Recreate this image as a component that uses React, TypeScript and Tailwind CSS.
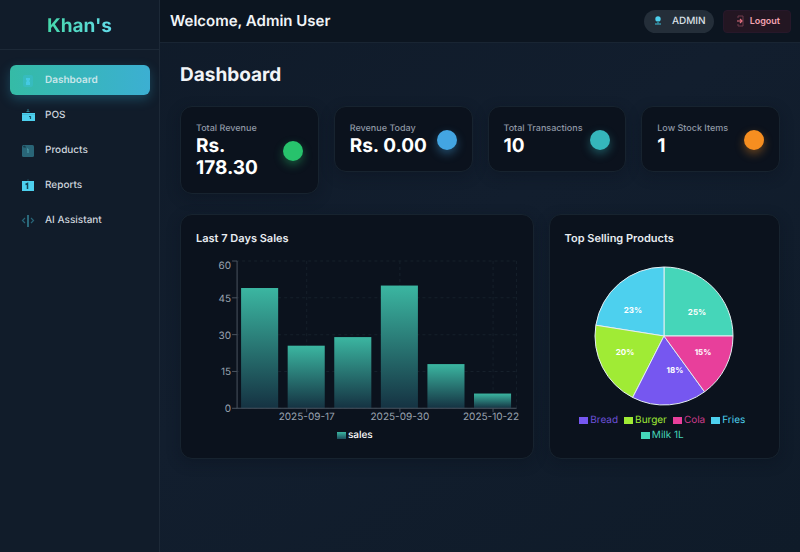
import React from "react";

const navItems = [
  { label: "Dashboard", icon: "dashboard" },
  { label: "POS", icon: "pos" },
  { label: "Products", icon: "products" },
  { label: "Reports", icon: "reports" },
  { label: "AI Assistant", icon: "ai" },
];

const stats = [
  { label: "Total Revenue", value: "Rs. 178.30", dot: "bg-[#27c26c] shadow-[0_4px_10px_#27c26c66]" },
  { label: "Revenue Today", value: "Rs. 0.00", dot: "bg-[#43a5e2] shadow-[0_4px_10px_#43a5e266]" },
  { label: "Total Transactions", value: "10", dot: "bg-[#35b6bb] shadow-[0_4px_10px_#35b6bb66]" },
  { label: "Low Stock Items", value: "1", dot: "bg-[#f68e20] shadow-[0_4px_10px_#f68e2066]" },
];

const sales = [49, 25.5, 29, 50, 18, 6];
const ticks = [0, 15, 30, 45, 60];
const dates = [
  { index: 1, label: "2025-09-17" },
  { index: 3, label: "2025-09-30" },
  { index: 5, label: "2025-10-22" },
];

const slices = [
  { name: "Milk 1L", from: 0, to: 90, text: "25%", x: 103, y: 45, color: "#45d6b9" },
  { name: "Fries", from: 90, to: 171, text: "23%", x: 39, y: 43, color: "#4dd0ee" },
  { name: "Burger", from: 171, to: 243, text: "20%", x: 31, y: 85, color: "#a0eb35" },
  { name: "Bread", from: 243, to: 306, text: "18%", x: 81, y: 103, color: "#7657f0" },
  { name: "Cola", from: 306, to: 360, text: "15%", x: 109, y: 85, color: "#e83f9b" },
];

const legend = [
  { name: "Bread", text: "text-[#6c51d8]", box: "bg-[#7657f0]" },
  { name: "Burger", text: "text-[#a0eb35]", box: "bg-[#a0eb35]" },
  { name: "Cola", text: "text-[#c93b89]", box: "bg-[#e83f9b]" },
  { name: "Fries", text: "text-[#4dd0ee]", box: "bg-[#4dd0ee]" },
  { name: "Milk 1L", text: "text-[#45d6b9]", box: "bg-[#45d6b9]" },
];

function NavIcon({ name }: { name: string }) {
  return (
    <svg className="size-[14px] shrink-0" viewBox="0 0 14 14" aria-hidden="true">
      {name === "dashboard" && (
        <>
          <rect x="2" y="1" width="10" height="12" rx="2" fill="#38bdd0" opacity="0.5" />
          <path d="M5 4h4v2H8.500v2H9v3H5V8h.5V6H5z" fill="#48cdec" opacity="0.8" />
        </>
      )}
      {name === "pos" && (
        <>
          <path d="M7 0v3M5.500 2.500h3" stroke="#2f8192" strokeWidth="1" />
          <rect x="1" y="4" width="13" height="8" fill="#4dd0ee" />
          <path d="M1 5.500h13" stroke="#3cabc4" strokeWidth="0.500" />
          <path d="M8 7.500h1.500V10" stroke="#15566a" strokeWidth="1.200" fill="none" />
        </>
      )}
      {name === "products" && (
        <>
          <rect x="1" y="1" width="12" height="12" rx="1.500" fill="#296577" />
          <path d="M2 3l2-1v2" stroke="#153847" strokeWidth="1" fill="none" />
          <path d="M6 5h1v4" stroke="#4fa1ad" strokeWidth="1" fill="none" />
        </>
      )}
      {name === "reports" && (
        <>
          <rect x="1" y="2" width="12" height="10" fill="#4dd0ee" />
          <path d="M4.500 5.500L6.500 4.500V10" stroke="#124557" strokeWidth="1.500" fill="none" />
          <path d="M7 0v2" stroke="#1e4654" strokeWidth="1" />
        </>
      )}
      {name === "ai" && (
        <>
          <path d="M4 4L1.500 6.500L4 9M10 4l2.500 2.500L10 9" stroke="#286578" strokeWidth="1.200" fill="none" />
          <path d="M7 1v12" stroke="#3d9db2" strokeWidth="1.200" />
        </>
      )}
    </svg>
  );
}

function SalesChart() {
  return (
    <svg className="w-full overflow-visible" viewBox="0 0 321 165" role="img" aria-label="Last 7 days sales">
      <defs>
        <linearGradient id="salesFill" x1="0" y1="0" x2="0" y2="1">
          <stop offset="0" stopColor="#3bb6a1" />
          <stop offset="1" stopColor="#153242" />
        </linearGradient>
      </defs>
      {ticks.map((tick) => {
        const y = 152 - (tick * 147) / 60;
        return (
          <g key={tick}>
            <path d={`M40 ${y}H320`} stroke="#16202b" strokeDasharray="3 3" />
            <path d={`M36 ${y}h5`} stroke="#4a535f" />
            <text x="35" y={tick === 60 ? y + 8 : y + 4} textAnchor="end" fontSize="10" fill="#9aa3b0">
              {tick}
            </text>
          </g>
        );
      })}
      {dates.map(({ index, label }) => {
        const x = 64 + index * 46.5;
        return (
          <g key={label}>
            <path d={`M${x} 5V152`} stroke="#16202b" strokeDasharray="3 3" />
            <path d={`M${x} 152v4`} stroke="#4a535f" />
            <text x={index === 5 ? x - 2 : x} y="164" textAnchor="middle" fontSize="10" fill="#9aa3b0">
              {label}
            </text>
          </g>
        );
      })}
      <path d="M320 5V152" stroke="#16202b" strokeDasharray="3 3" />
      {sales.map((value, index) => (
        <rect
          key={index}
          x={45 + index * 46.5}
          y={152 - (value * 147) / 60}
          width="37"
          height={(value * 147) / 60}
          fill="url(#salesFill)"
        />
      ))}
      <path d="M41 5V152H320" stroke="#4a535f" fill="none" />
    </svg>
  );
}

function PieChart() {
  const point = (degrees: number) => {
    const angle = (degrees * Math.PI) / 180;
    return `${70 + 69 * Math.cos(angle)} ${70 - 69 * Math.sin(angle)}`;
  };
  return (
    <svg className="mx-auto size-[140px]" viewBox="0 0 140 140" role="img" aria-label="Top selling products">
      {slices.map((slice) => (
        <path
          key={slice.name}
          d={`M70 70L${point(slice.from)}A69 69 0 0 0 ${point(slice.to)}Z`}
          fill={slice.color}
          stroke="#e4eef2"
          strokeWidth="1"
        />
      ))}
      {slices.map((slice) => (
        <text
          key={slice.name}
          x={slice.x}
          y={slice.y + 4}
          textAnchor="middle"
          fontSize="8"
          fontWeight="700"
          fill="#fff"
        >
          {slice.text}
        </text>
      ))}
    </svg>
  );
}

const card = "rounded-xl border border-[#17232f] bg-[#0b121d] shadow-[0_4px_14px_#08101a55]";

export default function App() {
  return (
    <div className="flex min-h-screen bg-linear-to-br from-[#0f1a28] via-[#121e2e] to-[#0f1b29] font-['Inter',sans-serif] text-white [text-rendering:geometricPrecision]">
      <aside className="w-40 shrink-0 border-r border-[#1d2937] bg-[#111c2a]">
        <div className="flex h-[50px] items-center justify-center border-b border-[#1d2937] pt-1">
          <span className="bg-linear-to-r from-[#45d6a9] to-[#63dce9] bg-clip-text text-[19px] font-bold text-transparent">
            Khan's
          </span>
        </div>
        <nav className="flex flex-col gap-[5px] py-[15px] pr-[9px] pl-2.5">
          {navItems.map((item, index) => (
            <a
              key={item.label}
              href="#"
              aria-current={index === 0 ? "page" : undefined}
              className={
                index === 0
                  ? "flex h-[30px] items-center gap-2.5 rounded-md bg-linear-to-r from-[#35bba6] to-[#3cafd2] pt-px pl-[11px] text-[10px] font-semibold text-[#c8e6ea] shadow-[0_4px_12px_#2e9ec455]"
                  : "flex h-[30px] items-center gap-2.5 rounded-md pt-px pl-[11px] text-[10px] font-medium text-[#ced5dd]"
              }
            >
              <NavIcon name={item.icon} />
              {item.label}
            </a>
          ))}
        </nav>
      </aside>
      <div className="min-w-0 flex-1">
        <header className="flex h-[43px] items-center justify-between border-b border-[#192533] bg-[#0c1520] pr-[9px] pl-2.5">
          <p className="text-[15px] font-semibold text-[#f1f4f7]">Welcome, Admin User</p>
          <div className="flex items-center gap-[9px]">
            <div className="flex h-[23px] items-center gap-2 rounded-full bg-[#242e39] px-2 text-[10px] font-medium text-[#dbe0e7]">
              <svg className="size-3" viewBox="0 0 12 12" aria-hidden="true">
                <circle cx="6" cy="4" r="2.700" fill="#4dd0ee" />
                <path d="M6 6v3" stroke="#2b7788" strokeWidth="2" />
                <path d="M3 9h6" stroke="#368fa4" strokeWidth="1.500" />
              </svg>
              ADMIN
            </div>
            <button className="flex h-[23px] items-center gap-1 rounded border border-[#27182a] bg-[#231622] px-2.5 text-[9px] font-semibold text-[#f3a3b1]">
              <svg className="size-3" viewBox="0 0 12 12" fill="none" aria-hidden="true">
                <path d="M4 3V1h5v10H4V9" stroke="#713b4b" strokeWidth="1" />
                <path d="M3 6h5M6 4l2 2-2 2" stroke="#e4707f" strokeWidth="1.200" />
              </svg>
              Logout
            </button>
          </div>
        </header>
        <main className="px-5 pt-[18px] pb-5">
          <h1 className="text-[19px] leading-7 font-bold text-[#f1f4f7]">Dashboard</h1>
          <section className="mt-[17px] grid grid-cols-4 items-start gap-[15px]">
            {stats.map((stat) => (
              <div
                key={stat.label}
                className={`${card} flex items-center justify-between px-[15px] pt-4 pb-[14px]`}
              >
                <div>
                  <p className="text-[9px] leading-3 font-medium text-[#8f98a5]">{stat.label}</p>
                  <p className="text-[19px] leading-[22px] font-bold">{stat.value}</p>
                </div>
                <span className={`size-5 shrink-0 rounded-full ${stat.dot}`} />
              </div>
            ))}
          </section>
          <section className="mt-5 grid grid-cols-[353fr_231fr] gap-[15px]">
            <div className={`${card} p-[15px]`}>
              <h2 className="mb-2.5 text-[11px] leading-4 font-semibold text-[#e8ecf1]">Last 7 Days Sales</h2>
              <SalesChart />
              <p className="mt-1.5 flex items-center justify-center gap-0.5 pr-1 text-[10px] leading-4 font-medium">
                <span className="h-[7px] w-[9px] bg-linear-to-b from-[#3bb6a1] to-[#1d4f5d]" />
                sales
              </p>
            </div>
            <div className={`${card} p-[15px]`}>
              <h2 className="mb-5 text-[11px] leading-4 font-semibold text-[#e8ecf1]">Top Selling Products</h2>
              <PieChart />
              <ul className="mt-[7px] flex flex-wrap justify-center gap-x-1.5 pr-4 pl-3 text-[10px] leading-[15px]">
                {legend.map((entry) => (
                  <li key={entry.name} className={`flex items-center gap-0.5 ${entry.text}`}>
                    <span className={`h-[7px] w-[9px] ${entry.box}`} />
                    {entry.name}
                  </li>
                ))}
              </ul>
            </div>
          </section>
        </main>
      </div>
    </div>
  );
}
